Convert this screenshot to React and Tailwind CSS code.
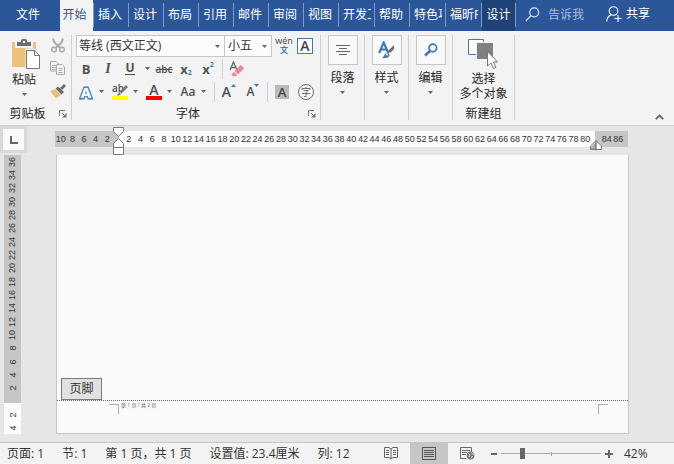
import React, { useState } from 'react';

const tabs = [
  { name: '插入', width: 'w-[35px]' },
  { name: '设计', width: 'w-[35px]' },
  { name: '布局', width: 'w-[35px]' },
  { name: '引用', width: 'w-[35px]' },
  { name: '邮件', width: 'w-[35px]' },
  { name: '审阅', width: 'w-[35px]' },
  { name: '视图', width: 'w-[35px]' },
  { name: '开发工具', width: 'w-[36px]' },
  { name: '帮助', width: 'w-[35px]' },
  { name: '特色功能', width: 'w-[36px]' },
  { name: '福昕PDF', width: 'w-[36px]' },
];

const leftMarks = [10, 8, 6, 4, 2];
const bodyMarks = Array.from({ length: 40 }, (_, i) => (i + 1) * 2);
const sideMarks = Array.from({ length: 18 }, (_, i) => 36 - i * 2);

function Arrow() {
  return (
    <svg width="5" height="3" viewBox="0 0 5 3" className="shrink-0" fill="#666">
      <path d="M0 0h5L2.5 3z" />
    </svg>
  );
}

function ToolButton({ label, children }) {
  return (
    <button aria-label={label} className="flex h-5 w-5 shrink-0 items-center justify-center text-[#505050]">
      {children}
    </button>
  );
}

function ArrowButton({ label }) {
  return (
    <button aria-label={label} className="flex h-5 w-[10px] shrink-0 items-center justify-center">
      <Arrow />
    </button>
  );
}

function Launcher({ label }) {
  return (
    <button aria-label={label} className="mr-1 flex h-3 w-2 items-center">
      <svg width="8" height="8" viewBox="0 0 8 8" fill="none" stroke="#777">
        <path d="M.5 6V.5H6M3 3l3 3" />
        <path d="M7.5 3v4.500H3z" fill="#777" stroke="none" />
      </svg>
    </button>
  );
}

function Divider() {
  return <div className="w-px shrink-0 bg-[#d0d0d0]" />;
}

function TitleTabs() {
  return (
    <header className="flex h-[31px] items-stretch bg-[#2b579a] text-white">
      <button className="w-[60px] pr-1 pb-[2px]">文件</button>
      <button className="w-[33px] bg-[#f3f3f3] pr-1 pb-[2px] text-[#2b579a]">开始</button>
      {tabs.map((tab) => (
        <button key={tab.name} className={`${tab.width} flex pt-[3px]`}>
          <span className="h-[24px] w-px shrink-0 bg-[#7f9cc6]" />
          <span className="ml-1 h-[24px] w-[28px] overflow-hidden text-left leading-[24px] whitespace-nowrap">{tab.name}</span>
        </button>
      ))}
      <div className="mt-[3px] h-[24px] w-px bg-[#7f9cc6]" />
      <button className="w-[33px] bg-[#1f4278] pb-[2px]">设计</button>
      <div className="mt-[3px] h-[24px] w-px bg-[#7f9cc6]" />
      <label className="flex flex-1 items-center pb-[2px] pl-[9px]">
        <svg width="15" height="15" viewBox="0 0 15 15" fill="none" stroke="#dbe4f2" strokeWidth="1.2">
          <circle cx="9.200" cy="5.300" r="4.500" />
          <path d="M6 8.700.8 14" />
        </svg>
        <input
          type="text"
          aria-label="告诉我"
          placeholder="告诉我"
          className="ml-2 w-12 bg-transparent outline-none placeholder:text-[#a9bddc]"
        />
      </label>
      <button className="mr-6 flex items-center gap-1 pb-1">
        <svg width="16" height="16" viewBox="0 0 16 16" fill="none" stroke="#fff" strokeWidth="1.1">
          <circle cx="7.500" cy="5" r="4.300" />
          <path d="M.7 15.500c.2-3.400 1.700-5.600 4.300-6.600M8.500 12.500h7M12 9v7" />
        </svg>
        共享
      </button>
    </header>
  );
}

function ClipboardGroup() {
  return (
    <section className="flex w-[71px] flex-col justify-between">
      <div className="flex">
        <button className="flex w-[48px] flex-col items-center pt-1">
          <svg width="28" height="32" viewBox="0 0 28 32" className="ml-1">
            <path d="M0 3h24v25H0z" fill="#eac27c" />
            <path d="M3 2h18v7H3z" fill="#f3f3f3" />
            <path d="M5 3h4V1.500A1.500 1.500 0 0 1 10.500 0h3A1.500 1.500 0 0 1 15 1.500V3h4v4H5z" fill="#6e6e6e" />
            <circle cx="12" cy="3" r="1.200" fill="#f3f3f3" />
            <path d="M14.500 10.500h8l5 5v15h-13z" fill="#fff" stroke="#f3f3f3" strokeWidth="2" />
            <path d="M14.500 11.500h8l5 5v13h-13zM22.500 11.500v5h5" fill="#fff" stroke="#777" />
          </svg>
          <span className="leading-[18px]">粘贴</span>
          <span className="flex h-[10px] items-center"><Arrow /></span>
        </button>
        <div className="flex flex-col gap-[3px]">
          <ToolButton label="剪切">
            <svg width="14" height="15" viewBox="0 0 14 15" fill="none" stroke="#aaa" strokeWidth="1.400">
              <circle cx="3" cy="11.500" r="2.300" />
              <circle cx="11" cy="11.500" r="2.300" />
              <path d="M2 .5c.3 2 1 3.500 2.500 5L9.500 10M12 .5c-.3 2-1 3.500-2.500 5L4.500 10" strokeWidth="2" />
            </svg>
          </ToolButton>
          <ToolButton label="复制">
            <svg width="16" height="14" viewBox="0 0 16 14" fill="#f7f7f7" stroke="#aaa">
              <path d="M.5.5H6l2.500 2.500v7h-8zM2 4.500h4M2 6.500h4M2 8.500h4" />
              <path d="M6.500 3.500H12l2.500 2.500v7.500h-8zM8.500 7.500h4M8.500 9.500h4M8.500 11.500h4" />
            </svg>
          </ToolButton>
          <ToolButton label="格式刷">
            <svg width="16" height="15" viewBox="0 0 16 15">
              <path d="M0 7 5 5l6 6-5 3.500z" fill="#e8c07a" />
              <path d="m5.500 4.500 2.500-2 6 5.500-2.500 2.500z" fill="#6b6b6b" />
              <path d="m10 4 4-4 2 2-4 4z" fill="#6b6b6b" />
            </svg>
          </ToolButton>
        </div>
      </div>
      <div className="flex items-center">
        <h2 className="flex-1 pr-1 text-center leading-3">剪贴板</h2>
        <Launcher label="剪贴板选项" />
      </div>
    </section>
  );
}

function FontGroup() {
  const [font, setFont] = useState('等线 (西文正文)');
  const [size, setSize] = useState('小五');

  return (
    <section className="flex w-[248px] flex-col justify-between pl-1">
      <div>
        <div className="flex h-[22px] items-center">
          <div className="relative flex h-[22px] w-[149px] items-center">
            <select
              aria-label="字体"
              value={font}
              onChange={(e) => setFont(e.target.value)}
              className="h-full w-full appearance-none border border-[#c6c6c6] bg-[#fcfcfc] pl-[2px] text-[#333]"
            >
              <option>等线 (西文正文)</option>
              <option>宋体</option>
            </select>
            <span className="pointer-events-none absolute right-[5px]"><Arrow /></span>
          </div>
          <div className="relative flex h-[22px] w-[47px] items-center">
            <select
              aria-label="字号"
              value={size}
              onChange={(e) => setSize(e.target.value)}
              className="h-full w-full appearance-none border border-l-0 border-[#c6c6c6] bg-[#fcfcfc] pl-[3px] text-[#333]"
            >
              <option>小五</option>
              <option>五号</option>
            </select>
            <span className="pointer-events-none absolute right-[5px]"><Arrow /></span>
          </div>
          <button aria-label="拼音指南" className="ml-[2px] flex w-5 flex-col items-center pb-[2px]">
            <span className="text-[9px] leading-[10px] text-[#444]">wén</span>
            <span className="text-[8px] leading-[8px] font-bold text-[#3f7ab8]">文</span>
          </button>
          <button aria-label="字符边框" className="ml-[3px] flex h-4 w-4 items-center justify-center border border-[#3f7ab8] bg-white text-[14px] leading-4 font-semibold text-[#444]">
            A
          </button>
        </div>

        <div className="flex h-[23px] items-center gap-[2px]">
          <ToolButton label="加粗"><span className="text-[13px] font-bold">B</span></ToolButton>
          <ToolButton label="倾斜"><span className="font-['Liberation_Serif',serif] text-[14px] font-bold italic">I</span></ToolButton>
          <ToolButton label="下划线"><span className="border-b border-[#505050] text-[12px] leading-[12px] font-bold">U</span></ToolButton>
          <ArrowButton label="下划线样式" />
          <ToolButton label="删除线"><span className="text-[10px] font-semibold line-through">abc</span></ToolButton>
          <ToolButton label="下标">
            <span className="text-[13px] font-bold">x</span>
            <span className="pt-2 text-[7px] font-bold text-[#3f7ab8]">2</span>
          </ToolButton>
          <ToolButton label="上标">
            <span className="text-[13px] font-bold">x</span>
            <span className="pb-2 text-[7px] font-bold text-[#3f7ab8]">2</span>
          </ToolButton>
          <div className="mx-[2px] h-5 w-px bg-[#d0d0d0]" />
          <ToolButton label="清除格式">
            <svg width="16" height="16" viewBox="0 0 16 16">
              <path d="M1 9 4.500 1 8 9M2.300 6.500h4.500" fill="none" stroke="#666" strokeWidth="1.300" />
              <path d="m5.500 10 5.500-5.500a1 1 0 0 1 1.300 0l2.300 2.300a1 1 0 0 1 0 1.300L9 13.500z" fill="#e8899a" />
              <path d="m4.800 10.800 3.400 3.400-1 1H4l-1.500-1.700z" fill="#e8899a" />
            </svg>
          </ToolButton>
        </div>

        <div className="flex h-[23px] items-center gap-1">
          <div className="flex">
            <ToolButton label="文本效果">
              <span className="text-[15px] leading-4 font-bold text-white [-webkit-text-stroke:3px_#3f7ab8] [paint-order:stroke_fill] [text-shadow:0_0_2px_#8fb8e0]">
                A
              </span>
            </ToolButton>
            <ArrowButton label="更多文本效果" />
          </div>
          <div className="flex">
            <ToolButton label="突出显示">
              <span className="relative flex h-4 w-4 flex-col justify-between">
                <span className="text-left text-[10px] leading-[9px] font-semibold">ab</span>
                <span className="h-1 bg-[#ff0]" />
                <svg width="12" height="12" viewBox="0 0 12 12" className="absolute top-0 left-1" fill="#777">
                  <path d="m10 1 2 2-6.500 6.500-2-2zM3 8l2 2-2 1.500H1z" />
                </svg>
              </span>
            </ToolButton>
            <ArrowButton label="突出显示颜色" />
          </div>
          <div className="flex">
            <ToolButton label="字体颜色">
              <span className="flex h-4 w-4 flex-col items-center justify-between">
                <span className="text-[14px] leading-[11px] font-semibold">A</span>
                <span className="h-1 w-full bg-[#f00]" />
              </span>
            </ToolButton>
            <ArrowButton label="更多字体颜色" />
          </div>
          <div className="flex">
            <ToolButton label="更改大小写"><span className="text-[12px] font-semibold">Aa</span></ToolButton>
            <ArrowButton label="大小写选项" />
          </div>
          <div className="ml-[2px] h-5 w-px bg-[#d0d0d0]" />
          <ToolButton label="增大字号">
            <span className="text-[14px] font-semibold">A</span>
            <svg width="5" height="3" viewBox="0 0 5 3" className="mb-3" fill="#3f7ab8"><path d="M0 3h5L2.500 0z" /></svg>
          </ToolButton>
          <ToolButton label="减小字号">
            <span className="text-[12px] font-semibold">A</span>
            <svg width="5" height="3" viewBox="0 0 5 3" className="mb-3" fill="#3f7ab8"><path d="M0 0h5L2.500 3z" /></svg>
          </ToolButton>
          <div className="h-5 w-px bg-[#d0d0d0]" />
          <ToolButton label="字符底纹">
            <span className="flex h-[14px] w-[14px] items-center justify-center bg-[#b9b9b9] text-[13px] font-semibold text-[#444]">A</span>
          </ToolButton>
          <ToolButton label="带圈字符">
            <span className="flex h-4 w-4 items-center justify-center rounded-full border border-[#666] bg-white text-[10px] leading-none">字</span>
          </ToolButton>
        </div>
      </div>
      <div className="flex items-center">
        <h2 className="flex-1 pr-2 text-center leading-3">字体</h2>
        <Launcher label="字体选项" />
      </div>
    </section>
  );
}

function CollapsedGroup({ label, children }) {
  return (
    <button className="flex w-[43px] flex-col items-center">
      <span className="flex h-[30px] w-[30px] items-center justify-center border border-[#c6c6c6] bg-[#f9f9f9]">{children}</span>
      <span className="pt-1 leading-[18px]">{label}</span>
      <span className="flex h-[10px] items-center"><Arrow /></span>
    </button>
  );
}

function Ribbon() {
  return (
    <div className="flex min-h-[95px] border-b border-[#d0d0d0] bg-[#f3f3f3] pt-1 pb-[5px]">
      <ClipboardGroup />
      <Divider />
      <FontGroup />
      <Divider />
      <CollapsedGroup label="段落">
        <svg width="14" height="12" viewBox="0 0 14 12" stroke="#666" shapeRendering="crispEdges">
          <path d="M0 1.500h14M3 4.500h8M0 7.500h14M3 10.500h8" />
        </svg>
      </CollapsedGroup>
      <Divider />
      <CollapsedGroup label="样式">
        <svg width="17" height="18" viewBox="0 0 17 18">
          <path d="M1.200 12 5.700 1.500 10.200 12M3 8.500h5.500" fill="none" stroke="#3f7ab8" strokeWidth="2.200" />
          <path d="M16 4v4l-4 4-2-2z" fill="#6b6b6b" />
          <path d="M4 16.500c2 0 2-3.500 4.500-4.500 2-.5 3.500 1 3 2.800-1 2.700-5 2.700-7.500 1.700z" fill="#3f7ab8" />
          <circle cx="9" cy="13.500" r="1.100" fill="#fff" />
        </svg>
      </CollapsedGroup>
      <Divider />
      <CollapsedGroup label="编辑">
        <svg width="14" height="14" viewBox="0 0 14 14" fill="none" stroke="#3f7ab8">
          <circle cx="8.800" cy="5" r="3.800" strokeWidth="1.800" />
          <path d="m6 8-5 4.500" strokeWidth="2.600" />
        </svg>
      </CollapsedGroup>
      <Divider />
      <section className="flex w-[61px] flex-col items-center justify-between">
        <button className="flex flex-col items-center pt-1">
          <svg width="30" height="32" viewBox="0 0 30 32">
            <path d="M.5.500h15v15H.5z" fill="#fff" stroke="#3f7ab8" />
            <path d="M8 3h18v17H8z" fill="#f3f3f3" />
            <path d="M9 4h16v16H9z" fill="#808080" />
            <path d="M19.500 12.500v14.500l3.500-3 2.500 5.500 2.500-1.200-2.500-5.300h4z" fill="#fff" stroke="#777" />
          </svg>
          <span className="leading-[15px] whitespace-nowrap">选择<br />多个对象</span>
        </button>
        <h2 className="leading-3">新建组</h2>
      </section>
      <Divider />
      <div className="flex flex-1 items-end justify-end pr-[10px]">
        <button aria-label="折叠功能区">
          <svg width="9" height="6" viewBox="0 0 9 6" fill="none" stroke="#666" strokeWidth="1.800">
            <path d="m.8 5.200 3.700-3.700 3.700 3.700" />
          </svg>
        </button>
      </div>
    </div>
  );
}

function Ruler() {
  return (
    <div className="flex h-[29px] text-[9px] text-[#333]">
      <div className="mr-[28px] h-[27px] w-[27px] shrink-0 bg-[#d9d9d9] pt-[3px] pl-[3px]">
        <button aria-label="制表符" className="flex h-[21px] w-[21px] items-center justify-center bg-[#fafafa]">
          <svg width="8" height="8" viewBox="0 0 8 8" fill="none" stroke="#666" strokeWidth="2"><path d="M1 0v7h7" /></svg>
        </button>
      </div>
      <div className="relative mt-[5px] mr-[46px] flex h-4 flex-1 bg-[#fcfcfc] font-['Liberation_Sans',sans-serif] leading-[17px]">
        <div className="flex w-[64px] shrink-0 bg-[#c6c6c6] pr-[6px]">
          {leftMarks.map((mark) => (
            <span key={mark} className="flex min-w-0 flex-1 justify-center">{mark}</span>
          ))}
        </div>
        <div className="flex flex-1 pl-1">
          {bodyMarks.map((mark) => (
            <span key={mark} className="flex min-w-0 flex-1 justify-center">{mark}</span>
          ))}
        </div>
        <div className="ml-1 flex w-[33px] shrink-0 bg-[#c6c6c6] pr-1 pl-[6px]">
          <span className="flex min-w-0 flex-1 justify-center">84</span>
          <span className="flex min-w-0 flex-1 justify-center">86</span>
        </div>
        <svg width="12" height="29" viewBox="0 0 12 29" className="absolute -top-[4px] left-[58px]" fill="#fff" stroke="#777">
          <path d="M.5.500h10v4l-5 5-5-5zM.5 20.500v-4l5-5 5 5v4zM.5 20.500h10v7H.5z" />
        </svg>
        <svg width="12" height="11" viewBox="0 0 12 11" className="absolute top-[9px] right-[26px]" fill="#fff" stroke="#777">
          <path d="M.5 9.500V6L6 .7 11.500 6v3.500z" />
          <path d="M1 9V7l5-5v7z" fill="#aaa" stroke="none" />
          <path d="M6 1v9" stroke="#555" />
        </svg>
      </div>
    </div>
  );
}

function Workspace() {
  return (
    <main className="flex flex-1">
      <div className="mr-[35px] mb-2 ml-1 flex w-[17px] flex-col font-['Liberation_Sans',sans-serif] text-[9px] text-[#333]">
        <div className="flex flex-1 flex-col bg-[#c6c6c6] pb-2">
          {sideMarks.map((mark) => (
            <span key={mark} className="flex min-h-0 flex-1 items-center justify-center">
              <span className="-rotate-90 leading-3">{mark}</span>
            </span>
          ))}
        </div>
        <div className="flex h-[31px] flex-col bg-[#fcfcfc] pt-[5px]">
          <span className="flex h-[13px] items-center justify-center"><span className="-rotate-90">2</span></span>
          <span className="flex h-[13px] items-center justify-center"><span className="-rotate-90">4</span></span>
        </div>
      </div>
      <article className="mr-[45px] mb-2 flex flex-1 flex-col justify-end border border-t-0 border-[#c6c6c6] bg-[#fafafa]">
        <div className="flex border-b border-dotted border-[#666] pl-1">
          <span className="flex h-[22px] w-[41px] items-center justify-center border border-[#7a7a7a] bg-[#e1e1e1] text-[#333]">页脚</span>
        </div>
        <footer className="flex h-8 items-start pt-[3px] pr-5 pl-[52px]">
          <div className="h-[10px] w-[10px] border-t border-r border-[#aaa]" />
          <p className="flex-1 pl-[2px] text-[5px] leading-[3px] text-[#666]">第 1 页 / 共 2 页</p>
          <div className="h-[10px] w-[10px] border-t border-l border-[#aaa]" />
        </footer>
      </article>
    </main>
  );
}

function StatusBar() {
  const [zoom, setZoom] = useState(20);

  return (
    <footer className="flex h-[22px] items-stretch border-t border-[#c6c6c6] bg-[#f3f3f3] text-[#333]">
      <div className="flex flex-1 items-center gap-[18px] pl-[7px] whitespace-nowrap">
        <span>页面: 1</span>
        <span>节: 1</span>
        <span>第 1 页，共 1 页</span>
        <span>设置值: 23.4厘米</span>
        <span>列: 12</span>
      </div>
      <button aria-label="阅读视图" className="flex w-[38px] items-center justify-center">
        <svg width="14" height="13" viewBox="0 0 14 13" fill="none" stroke="#666">
          <path d="M.5.500H5L7 2l2-1.500h4.500v10H9L7 12l-2-1.500H.5zM7 2v10M2 3.500h3M2 5.500h3M2 7.500h3M9 3.500h3M9 5.500h3M9 7.500h3" />
        </svg>
      </button>
      <button aria-label="页面视图" className="flex w-[38px] items-center justify-center bg-[#c6c6c6]">
        <svg width="14" height="13" viewBox="0 0 14 13" fill="none" stroke="#555" shapeRendering="crispEdges">
          <path d="M.5.500h13v12H.5zM2 3.500h10M2 5.500h10M2 7.500h10M2 9.500h10" />
        </svg>
      </button>
      <button aria-label="Web 版式视图" className="flex w-[38px] items-center justify-center">
        <svg width="15" height="13" viewBox="0 0 15 13" fill="none" stroke="#666">
          <path d="M6 11.500H.5V.5h11V5M2 3.500h8M2 5.500h5M2 7.500h4" />
          <circle cx="10.500" cy="8.500" r="3.900" fill="#777" stroke="none" />
          <path d="M8.500 6.500 10 8l-1 2M11.500 5.500l1 1.500 1.500.5M11 11l1.500-2" stroke="#eee" strokeWidth=".9" />
        </svg>
      </button>
      <div className="flex items-center pl-[5px]">
        <button aria-label="缩小" className="flex h-4 w-[6px] items-center"><span className="h-[2px] w-full bg-[#666]" /></button>
        <div className="relative mx-1 flex w-[100px] items-center">
          <span className="absolute top-1/2 left-1/2 h-1 w-px -translate-y-1/2 bg-[#aaa]" />
          <span className="absolute h-px w-full bg-[#aaa]" />
          <input
            type="range"
            aria-label="缩放"
            value={zoom}
            onChange={(e) => setZoom(Number(e.target.value))}
            className="relative h-3 w-full appearance-none bg-transparent [&::-webkit-slider-thumb]:h-[11px] [&::-webkit-slider-thumb]:w-[5px] [&::-webkit-slider-thumb]:appearance-none [&::-webkit-slider-thumb]:bg-[#666]"
          />
        </div>
        <button aria-label="放大" className="flex h-4 w-2 items-center">
          <svg width="8" height="8" viewBox="0 0 8 8" stroke="#666" strokeWidth="2"><path d="M0 4h8M4 0v8" /></svg>
        </button>
        <span className="w-[61px] pl-[11px]">42%</span>
      </div>
    </footer>
  );
}

export default function App() {
  return (
    <div className="flex min-h-screen flex-col bg-[#e6e6e6] font-['Open_Sans','Noto_Sans_CJK_SC',sans-serif] text-[12px] leading-4 text-[#262626]">
      <TitleTabs />
      <Ribbon />
      <Ruler />
      <Workspace />
      <StatusBar />
    </div>
  );
}
